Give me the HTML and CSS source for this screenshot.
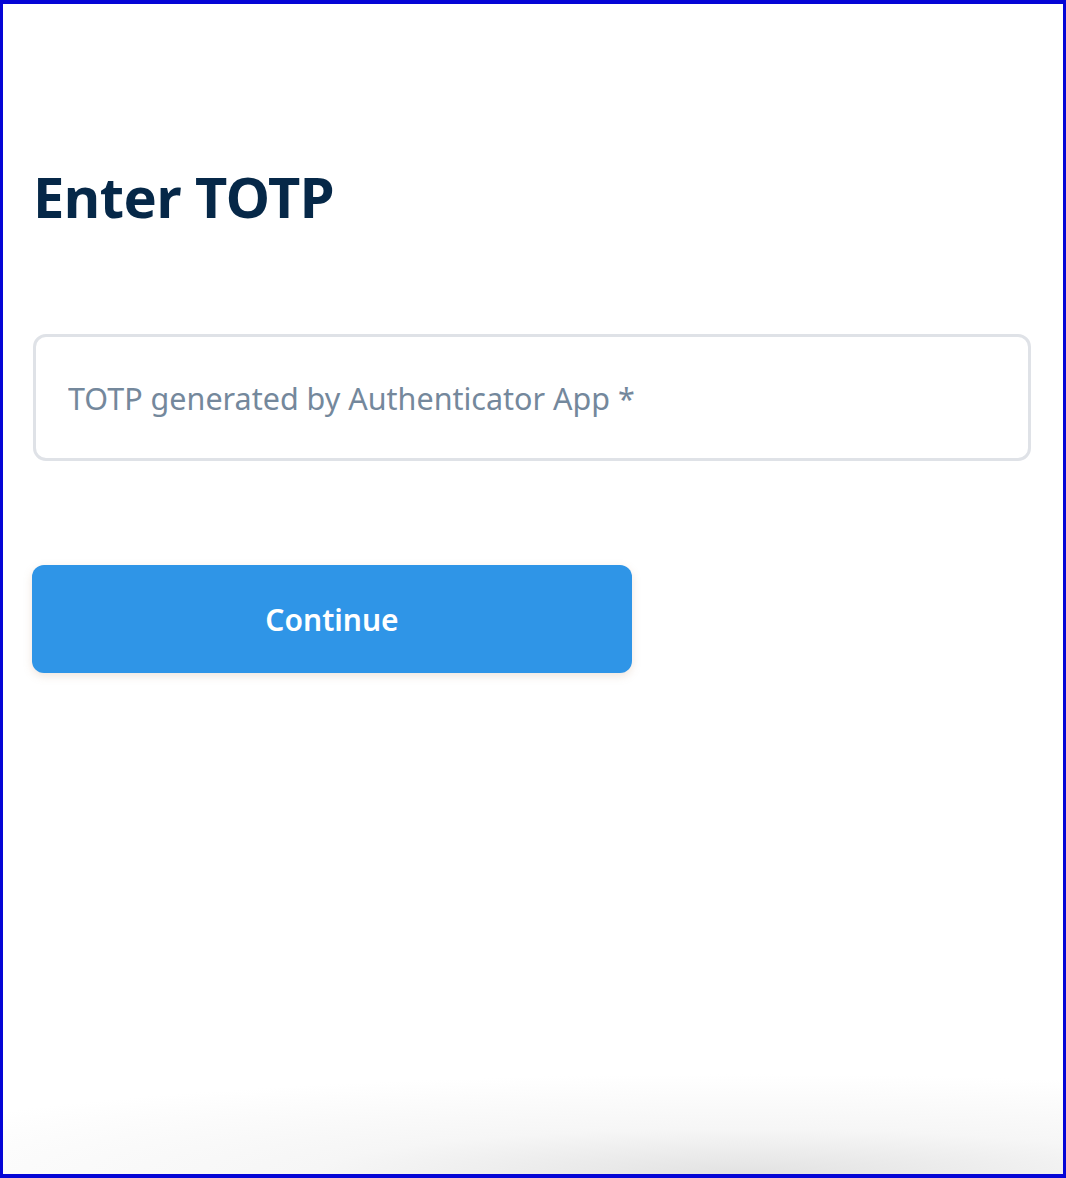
FILE: index.html
```html
<!DOCTYPE html>
<html lang="en">
<head>
    <meta charset="UTF-8">
    <meta name="viewport" content="width=device-width, initial-scale=1.0">
    <title>Enter TOTP</title>
    <link rel="stylesheet" href="styles.css">
</head>
<body>
    <div class="frame">
        <main class="totp-page">
            <h1 class="page-title">Enter TOTP</h1>

            <form class="totp-form" onsubmit="return false;">
                <input class="totp-input" type="text" inputmode="numeric" placeholder="TOTP generated by Authenticator App *">
                <button class="continue-button" type="submit">Continue</button>
            </form>
        </main>
        <div class="bottom-shade"></div>
    </div>
</body>
</html>
```

FILE: styles.css
```css
* {
    margin: 0;
    padding: 0;
    box-sizing: border-box;
}

html, body {
    height: 100%;
    background-color: #fff;
    font-family: 'Noto Sans', 'Open Sans', 'Liberation Sans', sans-serif;
}

.frame {
    position: relative;
    height: 1178px;
    border: 3px solid #0505d6;
    border-top-width: 4px;
    border-bottom-width: 4px;
    overflow: hidden;
    display: flex;
    flex-direction: column;
}

.totp-page {
    padding: 159px 32px 0 30px;
}

.page-title {
    font-size: 56px;
    font-weight: 700;
    color: #062848;
    line-height: 1.2;
    letter-spacing: -0.5px;
}

.totp-form {
    margin-top: 104px;
    display: flex;
    flex-direction: column;
    align-items: flex-start;
    gap: 104px;
}

.totp-input {
    width: 100%;
    height: 127px;
    border: 3px solid #dfe2e7;
    border-radius: 13px;
    padding: 0 32px;
    font-family: inherit;
    font-size: 30.5px;
    color: #1c2b3a;
    outline: none;
}

.totp-input::placeholder {
    color: #74889c;
}

.continue-button {
    width: 600px;
    height: 108px;
    margin-left: -1px;
    border: none;
    border-radius: 12px;
    background-color: #2f95e7;
    color: #fff;
    font-family: inherit;
    font-size: 30px;
    font-weight: 600;
    box-shadow: 0 3px 8px rgba(190, 150, 120, 0.25);
    cursor: pointer;
}

/* soft shadow along the bottom edge */
.bottom-shade {
    position: absolute;
    left: 0;
    right: 0;
    bottom: 0;
    height: 100px;
    background: radial-gradient(ellipse 90% 100% at 70% 100%, #e2e2e2 0%, rgba(240, 240, 240, 0.6) 45%, rgba(255, 255, 255, 0) 100%);
    pointer-events: none;
}
```
